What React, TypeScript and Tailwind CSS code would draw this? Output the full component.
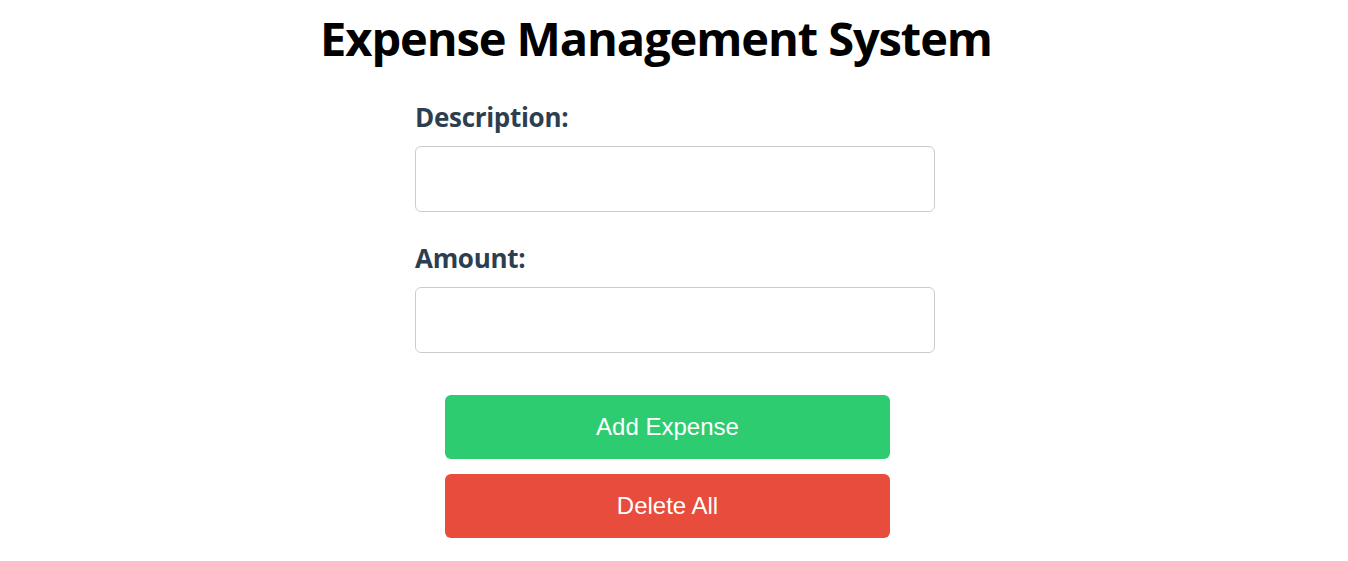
export default function App() {
  return (
    <div className="min-h-[561px] w-full bg-white" style={{ fontFamily: '"Open Sans", "Noto Sans", sans-serif' }}>
      <h1 className="pr-[36px] pt-[12px] text-center text-[47px] font-bold leading-[52px] tracking-[-1.1px] text-black">
        Expense Management System
      </h1>
      <div className="flex justify-center pl-[2px]">
        <div className="mt-[37px] w-[520px]">
          <label className="block text-[26px] font-bold leading-[32px] tracking-[-0.3px] text-[#2c3e50]">Description:</label>
          <input className="mt-[13px] block h-[66px] w-[520px] rounded-[6px] border border-[#cccccc] bg-white" />
          <label className="mt-[30px] block text-[26px] font-bold leading-[32px] tracking-[-0.3px] text-[#2c3e50]">Amount:</label>
          <input className="mt-[13px] block h-[66px] w-[520px] rounded-[6px] border border-[#cccccc] bg-white" />
          <div className="ml-[30px] mt-[42px] flex w-[445px] flex-col gap-[15px]" style={{ fontFamily: '"Liberation Sans", Arial, sans-serif' }}>
            <button className="h-[64px] w-[445px] rounded-[6px] bg-[#2ecc71] text-[24px] text-white">Add Expense</button>
            <button className="h-[64px] w-[445px] rounded-[6px] bg-[#e74c3c] text-[24px] text-white">Delete All</button>
          </div>
        </div>
      </div>
    </div>
  );
}
